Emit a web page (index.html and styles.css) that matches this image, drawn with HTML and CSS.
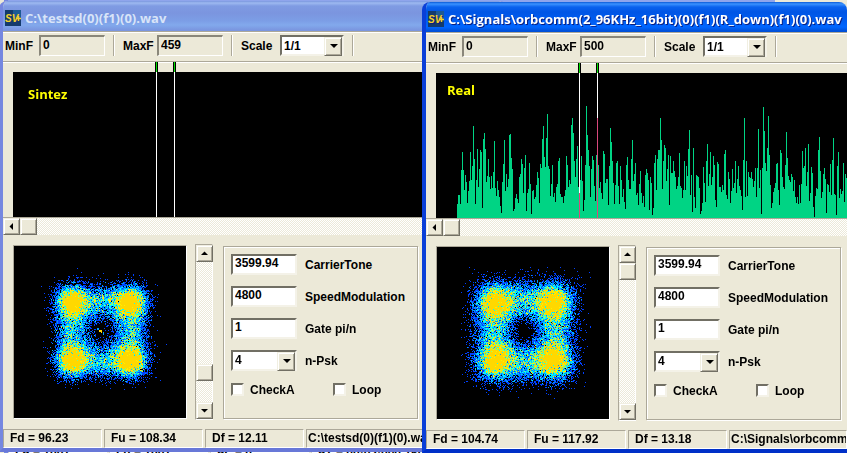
FILE: index.html
```html
<!doctype html>
<html>
    <head>
        <meta charset="utf-8">
        <title>Signal Viewer</title>
        <link rel="stylesheet" href="styles.css">
    </head>
    <body>
        <!-- window behind, only its status bar peeks out -->
        <div class="back-window">
            <div class="status">
                <div class="cell">Fd = 1001</div>
                <div class="cell">Fu = 1001</div>
                <div class="cell">dF = 0</div>
                <div class="cell wide">dT = 00:02:000.150</div>
                <div class="cell wide">0000 0:0</div>
                <div class="cell">dT = 00:000</div>
            </div>
        </div>

        <div class="window inactive">
            <div class="title">
                <svg class="logo" viewBox="0 0 16 16">
                    <rect width="16" height="16" fill="#143a6c"/>
                    <rect x="8" width="8" height="8" fill="#1d5a94"/>
                    <text x="0" y="12" class="logo-text">SV</text>
                    <path d="M13.500 6v5M11 8.500h5" stroke="#f4cf2a" stroke-width="1.500"/>
                </svg>
                <span>C:\testsd(0)(f1)(0).wav</span>
            </div>
            <div class="toolbar">
                <label for="min1">MinF</label>
                <input class="field gray" id="min1" type="text" value="0" readonly>
                <i class="sep"></i>
                <label for="max1">MaxF</label>
                <input class="field gray" id="max1" type="text" value="459" readonly>
                <i class="sep"></i>
                <label for="scale1">Scale</label>
                <span class="combo"><select id="scale1"><option>1/1</option></select></span>
                <i class="sep"></i>
            </div>
            <div class="spectrum">
                <canvas class="spectrum-canvas" data-kind="sintez"></canvas>
                <span class="tag tag-sintez">Sintez</span>
            </div>
            <div class="hscroll">
                <button class="sb" aria-label="Left"><svg viewBox="0 0 7 7"><path d="M5 0v7L1.500 3.500z"/></svg></button>
                <button class="sb" aria-label="Position"></button>
            </div>
            <div class="panel">
                <canvas class="scatter" width="172" height="172" data-kind="sintez"></canvas>
                <div class="vscroll">
                    <button class="sb" aria-label="Up"><svg viewBox="0 0 7 7"><path d="M0 5h7L3.500 1.500z"/></svg></button>
                    <button class="sb low" aria-label="Position"></button>
                    <button class="sb" aria-label="Down"><svg viewBox="0 0 7 7"><path d="M0 2h7L3.500 5.500z"/></svg></button>
                </div>
                <div class="group">
                    <div class="row"><input class="field" id="tone1" type="text" value="3599.94"><label for="tone1">CarrierTone</label></div>
                    <div class="row"><input class="field" id="speed1" type="text" value="4800"><label for="speed1">SpeedModulation</label></div>
                    <div class="row"><input class="field" id="gate1" type="text" value="1"><label for="gate1">Gate pi/n</label></div>
                    <div class="row"><span class="combo"><select id="psk1"><option>4</option></select></span><label for="psk1">n-Psk</label></div>
                    <div class="checks">
                        <label><input type="checkbox">CheckA</label>
                        <label><input type="checkbox">Loop</label>
                    </div>
                </div>
            </div>
            <div class="status">
                <div class="cell">Fd = 96.23</div>
                <div class="cell">Fu = 108.34</div>
                <div class="cell">Df = 12.11</div>
                <div class="cell path">C:\testsd(0)(f1)(0).wav</div>
            </div>
        </div>

        <div class="window active">
            <div class="title">
                <svg class="logo" viewBox="0 0 16 16">
                    <rect width="16" height="16" fill="#143a6c"/>
                    <rect x="8" width="8" height="8" fill="#1d5a94"/>
                    <text x="0" y="12" class="logo-text">SV</text>
                    <path d="M13.500 6v5M11 8.500h5" stroke="#f4cf2a" stroke-width="1.500"/>
                </svg>
                <span>C:\Signals\orbcomm(2_96KHz_16bit)(0)(f1)(R_down)(f1)(0).wav</span>
            </div>
            <div class="toolbar">
                <label for="min2">MinF</label>
                <input class="field gray" id="min2" type="text" value="0" readonly>
                <i class="sep"></i>
                <label for="max2">MaxF</label>
                <input class="field gray" id="max2" type="text" value="500" readonly>
                <i class="sep"></i>
                <label for="scale2">Scale</label>
                <span class="combo"><select id="scale2"><option>1/1</option></select></span>
                <i class="sep"></i>
            </div>
            <div class="spectrum">
                <canvas class="spectrum-canvas" data-kind="real"></canvas>
                <span class="tag tag-real">Real</span>
            </div>
            <div class="hscroll">
                <button class="sb" aria-label="Left"><svg viewBox="0 0 7 7"><path d="M5 0v7L1.500 3.500z"/></svg></button>
                <button class="sb" aria-label="Position"></button>
            </div>
            <div class="panel">
                <canvas class="scatter" width="172" height="172" data-kind="real"></canvas>
                <div class="vscroll">
                    <button class="sb" aria-label="Up"><svg viewBox="0 0 7 7"><path d="M0 5h7L3.500 1.500z"/></svg></button>
                    <button class="sb" aria-label="Position"></button>
                    <button class="sb last" aria-label="Down"><svg viewBox="0 0 7 7"><path d="M0 2h7L3.500 5.500z"/></svg></button>
                </div>
                <div class="group">
                    <div class="row"><input class="field" id="tone2" type="text" value="3599.94"><label for="tone2">CarrierTone</label></div>
                    <div class="row"><input class="field" id="speed2" type="text" value="4800"><label for="speed2">SpeedModulation</label></div>
                    <div class="row"><input class="field" id="gate2" type="text" value="1"><label for="gate2">Gate pi/n</label></div>
                    <div class="row"><span class="combo"><select id="psk2"><option>4</option></select></span><label for="psk2">n-Psk</label></div>
                    <div class="checks">
                        <label><input type="checkbox">CheckA</label>
                        <label><input type="checkbox">Loop</label>
                    </div>
                </div>
            </div>
            <div class="status">
                <div class="cell">Fd = 104.74</div>
                <div class="cell">Fu = 117.92</div>
                <div class="cell">Df = 13.18</div>
                <div class="cell path">C:\Signals\orbcomm(2_96KHz_16bit)(0)(f1)(R_down)(f1)(0).wav</div>
            </div>
        </div>

        <script src="script.js"></script>
    </body>
</html>
```
FILE: styles.css
```css
*{
    box-sizing: border-box;
}
body{
    margin: 0;
    height: 100vh;
    position: relative;
    overflow: hidden;
    background: #ece9d8;
    color: #000;
    font-family: "Liberation Sans", Arial, sans-serif;
    font-size: 12px;
    font-weight: bold;
}

/* WINDOWS */
.window{
    position: absolute;
    display: flex;
    flex-direction: column;
    border: 4px solid;
    border-top: none;
    border-radius: 8px 8px 0 0;
    background: #ece9d8;
    overflow: hidden;
}
.inactive{
    left: -1px;
    top: 1px;
    width: 60%;
    border-color: #7587e0;
    border-bottom-color: #6878d8;
}
.active{
    left: 422px;
    top: 2px;
    right: 0;
    border-right: none;
    border-color: #0048e0;
    border-left-color: #0a3fd8;
    border-bottom-color: #0030c8;
}
.back-window{
    position: absolute;
    left: 4px;
    top: 0;
    bottom: 0;
    width: 771px;
    display: flex;
    flex-direction: column;
    justify-content: flex-end;
    border-left: 4px solid #7587e0;
    background: linear-gradient(#8fa5ec, #8fa5ec 4px, #ece9d8 4px);
    overflow: hidden;
}
.back-window .status{
    height: 8px;
}

.title{
    display: flex;
    align-items: center;
    gap: 4px;
    height: 30px;
    margin: 0 -4px;
    padding: 3px 0 0 6px;
    font-family: "Open Sans", sans-serif;
    font-size: 13px;
    white-space: nowrap;
}
.inactive .title{
    color: #d8e4f8;
    background: linear-gradient(#7a96df, #9db9f0 2px, #7f9be3 5px, #7b95df 12px, #7c9ee6 20px, #82a9ec 24px, #7a96e0 29px);
}
.active .title{
    color: #fff;
    text-shadow: 1px 1px #0a1f80;
    background: linear-gradient(#0a5ad8, #3a92ff 2px, #0a62ee 5px, #0055e5 10px, #005cf0 18px, #0066ff 25px, #0050d8 29px);
}
.logo{
    width: 16px;
    height: 16px;
    flex: none;
}
.logo-text{
    font: italic bold 10px "Liberation Sans", sans-serif;
    fill: #f4cf2a;
}

/* TOOLBAR */
.toolbar{
    display: flex;
    align-items: center;
    height: 31px;
    padding: 0 0 2px 2px;
    border-top: 1px solid #aca899;
    border-bottom: 1px solid #aca899;
    box-shadow: inset 0 1px #fff, 0 1px #fff;
}
.toolbar label{
    width: 34px;
}
.toolbar .combo{
    margin-left: 5px;
}
.sep{
    width: 2px;
    height: 21px;
    margin: 0 8px;
    border-left: 1px solid #aca899;
    border-right: 1px solid #fff;
}

/* FIELDS */
.field, select{
    width: 66px;
    height: 21px;
    margin: 0;
    padding: 0 0 2px 2px;
    border: 2px solid;
    border-color: #716f64 #f4f2e8 #f4f2e8 #716f64;
    border-radius: 0;
    background: #fff;
    color: #000;
    font: inherit;
    outline: none;
}
.gray{
    background: #ece9d8;
    border-width: 2px 1px 1px 2px;
    border-color: #8a877a #fff #fff #8a877a;
}
select{
    appearance: none;
    display: block;
    padding: 0 0 0 2px;
}
.toolbar select{
    width: 64px;
}
.combo{
    position: relative;
    display: block;
}
.combo::before{
    content: "";
    position: absolute;
    right: 2px;
    top: 2px;
    width: 16px;
    height: 17px;
    background: #ece9d8;
    border: 1px solid;
    border-color: #f1efe2 #716f64 #716f64 #f1efe2;
    box-shadow: inset 1px 1px #fff, inset -1px -1px #aca899;
    pointer-events: none;
}
.combo::after{
    content: "";
    position: absolute;
    right: 6px;
    top: 9px;
    border: 4px solid transparent;
    border-top-color: #000;
    border-bottom: none;
    pointer-events: none;
}

/* SPECTRUM */
.spectrum{
    position: relative;
    height: 156px;
    padding-left: 10px;
    border-bottom: 1px solid #aca899;
}
.spectrum-canvas{
    display: block;
    width: 100%;
    height: 155px;
}
.tag{
    position: absolute;
    color: #ff0;
    font-family: "Open Sans", sans-serif;
    font-size: 13px;
    line-height: 18px;
}
.tag-sintez{
    left: 25px;
    top: 23px;
}
.tag-real{
    left: 21px;
    top: 18px;
}

/* SCROLLBARS */
.hscroll, .vscroll{
    display: flex;
    background: repeating-conic-gradient(#fff 0 25%, #ece9d8 0 50%) 0 0 / 2px 2px;
}
.hscroll{
    height: 17px;
}
.vscroll{
    flex-direction: column;
    flex: none;
    width: 18px;
    height: 176px;
    border: 1px solid;
    border-color: #aca899 #fff #fff #aca899;
}
.sb{
    display: flex;
    align-items: center;
    justify-content: center;
    flex: none;
    width: 17px;
    height: 17px;
    padding: 0;
    border: 1px solid;
    border-color: #f1efe2 #716f64 #716f64 #f1efe2;
    box-shadow: inset 1px 1px #fff, inset -1px -1px #aca899;
    background: #ece9d8;
}
.sb svg{
    width: 7px;
    height: 7px;
}
.low{
    margin-top: auto;
    margin-bottom: 21px;
}
.last{
    margin-top: auto;
}

/* LOWER PANEL */
.panel{
    display: flex;
    align-items: center;
    height: 194px;
    padding-left: 10px;
}
.scatter{
    box-sizing: content-box;
    flex: none;
    border: 1px solid;
    border-color: #aca899 #fff #fff #aca899;
    margin-right: 8px;
}
.group{
    width: 195px;
    height: 173px;
    margin-left: 10px;
    padding: 7px 0 0 7px;
    border: 1px solid #aca899;
    box-shadow: inset 1px 1px #fff, 1px 1px #fff;
}
.row{
    display: flex;
    align-items: center;
    gap: 8px;
    height: 21px;
    margin-bottom: 11px;
}
.row label{
    padding-top: 1px;
}
.checks{
    display: flex;
}
.checks label{
    display: flex;
    flex: none;
    align-items: center;
    gap: 6px;
    width: 102px;
    height: 16px;
}
.checks label:last-child{
    width: 70px;
}
.checks input{
    appearance: none;
    width: 13px;
    height: 13px;
    margin: 0;
    background: #fff;
    border: 2px solid;
    border-color: #716f64 #f4f2e8 #f4f2e8 #716f64;
}

/* STATUS BAR */
.status{
    display: flex;
    gap: 2px;
    height: 19px;
}
.cell{
    flex: none;
    width: 99px;
    padding-left: 6px;
    border: 1px solid;
    border-color: #aca899 #fff #fff #aca899;
    line-height: 17px;
    white-space: nowrap;
}
.wide{
    width: 130px;
}
.path{
    flex: 1;
    padding-left: 1px;
    overflow: hidden;
}
```
FILE: script.js
```js
// bar tops of the real signal, counted from y = 37 of the canvas
const levels = [
    104,95,95,104,70,52,70,90,75,82,103,91,81,52,80,66,26,59,104,80,49,87,69,50,52,108,39,33,49,82,76,59,77,89,76,88,
    72,41,88,96,81,90,97,106,113,82,64,40,91,74,87,79,35,34,58,69,111,109,98,94,99,103,77,74,59,64,93,68,55,111,93,89,
    63,84,114,91,90,99,97,85,72,78,103,64,68,39,26,57,67,38,14,66,69,96,84,65,97,93,102,87,84,61,58,94,97,97,103,96,90,
    56,65,87,80,84,25,18,33,61,77,59,46,87,93,80,56,81,111,100,65,6,35,50,66,97,69,56,60,86,101,55,18,65,88,82,93,99,51,
    54,83,79,79,105,66,28,42,61,83,104,85,63,61,86,104,66,80,97,89,102,109,65,57,80,89,89,59,40,81,74,63,95,93,105,84,
    71,93,103,96,107,75,69,73,80,110,
    77,83,115,108,63,55,90,59,50,50,18,40,89,61,45,48,81,69,55,105,56,73,73,61,71,77,89,86,77,53,86,88,98,90,61,90,66,
    76,49,30,95,75,112,48,97,108,75,76,77,88,114,111,103,67,83,102,61,44,86,74,52,85,77,56,65,100,107,62,64,87,87,92,85,
    90,54,50,95,99,72,79,103,91,69,88,83,61,93,79,66,86,90,96,110,60,18,97,61,96,72,77,78,72,79,87,81,68,97,68,29,88,70,
    114,68,7,31,63,71,48,16,55,85,108,103,92,88,83,64,63,90,105,50,53,77,87,89,65,32,58,76,80,82,74,77,91,80,97,103,97,
    104,85,103,84,51,68,66,48,86,72,44,101,93,67,73,107,117,96,88,89,50,37,71,98,92,74,68,79,113,84,85,92,64,95,60,38,94,
    95,115,66,52,98,89,94,91,63,102,74,78
];

const cursors = [143, 161];

function drawSpectrum(canvas){
    canvas.width = canvas.clientWidth;
    canvas.height = 155;
    const ctx = canvas.getContext('2d');
    const real = canvas.dataset.kind === 'real';

    ctx.fillStyle = '#000';
    ctx.fillRect(0, 10, canvas.width, 145);
    if(real){
        ctx.fillStyle = '#00d484';
        levels.forEach((top, i) => {
            ctx.fillRect(21 + i, 37 + top, 1, 118 - top);
        });
    }

    // cursors turn pink where they cross a bar
    cursors.forEach((x) => {
        ctx.fillStyle = '#000';
        ctx.fillRect(x - 1, 0, 3, 10);
        ctx.fillStyle = '#00e000';
        ctx.fillRect(x, 0, 1, 10);
        ctx.fillStyle = '#fff';
        ctx.fillRect(x, 10, 1, 145);
        if(real){
            const top = 37 + levels[x - 21];
            ctx.fillStyle = '#d8487c';
            ctx.fillRect(x, top, 1, 155 - top);
        }
    });
}

// small seeded generator, so the cloud is the same on each load
let seed = 7;
function rand(){
    seed = (seed * 1664525 + 1013904223) % 4294967296;
    return seed / 4294967296;
}
function poisson(mean){
    const limit = Math.exp(-mean);
    let n = 0;
    let p = rand();
    while(p > limit){
        n++;
        p *= rand();
    }
    return n;
}

const palette = ['#000000', '#0040ff', '#0090ff', '#00d0ff', '#00ffff', '#80ff80', '#fff000', '#ffd800'];
const clouds = {
    sintez: {x: 87, y: 85, half: 30, ring: 3.8, edge: 8, hole: 22, peak: 11, spot: 8},
    real: {x: 87, y: 84, half: 30, ring: 4, edge: 10, hole: 21, peak: 9, spot: 9}
};

function drawScatter(canvas){
    const ctx = canvas.getContext('2d');
    const c = clouds[canvas.dataset.kind];
    ctx.fillStyle = '#000';
    ctx.fillRect(0, 0, 172, 172);
    for(let y = 0; y < 172; y++){
        for(let x = 0; x < 172; x++){
            const dx = Math.abs(x - c.x);
            const dy = Math.abs(y - c.y);
            // square edge outside, round hole inside
            const outer = Math.pow(Math.pow(dx, 6) + Math.pow(dy, 6), 1 / 6);
            const d = Math.max(outer - c.half, 0);
            let mean = c.ring * Math.exp(-d * d / (2 * c.edge * c.edge));
            mean *= 1 - Math.exp(-Math.pow(Math.hypot(dx, dy) / c.hole, 3));
            const r = (dx - 29) ** 2 + (dy - 29) ** 2;
            mean += c.peak * Math.exp(-r / (2 * c.spot * c.spot));
            const n = Math.min(poisson(mean), 7);
            if(n > 0){
                ctx.fillStyle = palette[n];
                ctx.fillRect(x, y, 1, 1);
            }
        }
    }
    if(canvas.dataset.kind === 'sintez'){
        ctx.fillStyle = '#00a0ff';
        ctx.fillRect(83, 82, 2, 2);
        ctx.fillRect(89, 86, 1, 3);
        ctx.fillStyle = '#ffd800';
        ctx.fillRect(85, 84, 3, 2);
        ctx.fillRect(87, 86, 1, 1);
    }
}

document.querySelectorAll('.spectrum-canvas').forEach(drawSpectrum);
document.querySelectorAll('.scatter').forEach(drawScatter);
```
